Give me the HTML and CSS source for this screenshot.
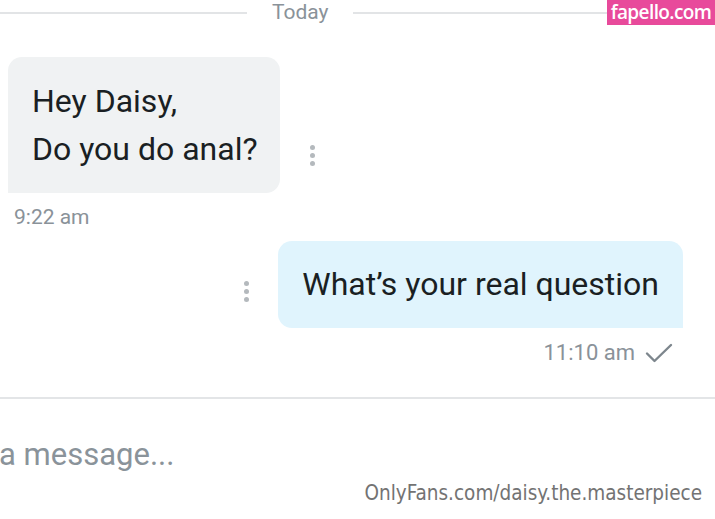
FILE: index.html
```html
<!DOCTYPE html>
<html>
<head>
<meta charset="utf-8">
<link rel="stylesheet" href="styles.css">
</head>
<body>
<div class="screen">
  <div class="date-row">
    <span class="date-line date-line-left"></span>
    <span class="date-label">Today</span>
    <span class="date-line date-line-right"></span>
  </div>
  <div class="badge">fapello.com</div>

  <div class="msg msg-in">
    <div class="msg-row">
      <div class="bubble bubble-in">Hey Daisy,<br>Do you do anal?</div>
      <div class="kebab kebab-in"><i></i><i></i><i></i></div>
    </div>
    <div class="msg-time msg-time-in">9:22 am</div>
  </div>

  <div class="msg msg-out">
    <div class="msg-row msg-row-out">
      <div class="kebab kebab-out"><i></i><i></i><i></i></div>
      <div class="bubble bubble-out">What’s your real question</div>
    </div>
    <div class="msg-time msg-time-out">
      <span>11:10 am</span>
      <svg class="check" width="28" height="20" viewBox="0 0 28 20"><path d="M2 10.5 L9.5 18 L26 2" fill="none" stroke="#7d868d" stroke-width="2.4" stroke-linecap="round" stroke-linejoin="round"/></svg>
    </div>
  </div>

  <div class="composer">
    <div class="composer-input">a message...</div>
  </div>
  <div class="watermark">OnlyFans.com/daisy.the.masterpiece</div>
</div>
</body>
</html>
```

FILE: styles.css
```css
html, body {
  margin: 0;
  padding: 0;
  background: #ffffff;
}
.screen {
  position: relative;
  width: 715px;
  height: 519px;
  overflow: hidden;
  font-family: Roboto, "Liberation Sans", sans-serif;
}
.date-row {
  display: flex;
  align-items: center;
  height: 26px;
}
.date-line {
  height: 2px;
  background: #e2e4e6;
}
.date-line-left {
  width: 247px;
}
.date-line-right {
  flex: 1;
}
.date-label {
  align-self: flex-start;
  font-family: Roboto, sans-serif;
  font-size: 21px;
  line-height: 25px;
  color: #8a9299;
  padding: 0 24px 0 25px;
}
.badge {
  position: absolute;
  top: 0;
  right: 0;
  width: 108px;
  height: 25px;
  background: #e84a9b;
  color: #fff;
  font-family: "Open Sans", sans-serif;
  font-weight: 600;
  font-size: 19px;
  line-height: 24px;
  text-align: center;
  letter-spacing: -0.6px;
}
.msg-in {
  margin-top: 31px;
}
.msg-row {
  display: flex;
  align-items: flex-end;
}
.msg-row-out {
  justify-content: flex-end;
}
.bubble {
  font-size: 32px;
  color: #1a1f23;
}
.bubble-in {
  margin-left: 8px;
  width: 248px;
  padding: 20px 0 20px 24px;
  line-height: 48px;
  background: #f0f2f3;
  border-radius: 14px 14px 14px 0;
}
.bubble-out {
  margin-right: 32px;
  padding: 22px 24px 22px 24px;
  line-height: 43px;
  background: #e0f4fd;
  border-radius: 14px 14px 0 14px;
}
.kebab {
  display: flex;
  flex-direction: column;
  gap: 3px;
}
.kebab i {
  display: block;
  width: 5px;
  height: 5px;
  border-radius: 50%;
  background: #b4b9bd;
}
.kebab-in {
  margin-left: 30px;
  margin-bottom: 27px;
}
.kebab-out {
  margin-right: 29px;
  margin-bottom: 26px;
}
.msg-time {
  font-size: 21px;
  line-height: 28px;
  color: #8a9299;
}
.msg-time-in {
  margin-top: 10px;
  padding-left: 14px;
}
.msg-out {
  margin-top: 10px;
}
.msg-time-out {
  display: flex;
  justify-content: flex-end;
  align-items: center;
  gap: 10px;
  margin-top: 11px;
  padding-right: 42px;
  font-size: 22px;
}
.check {
  display: block;
}
.composer {
  margin-top: 30px;
  border-top: 2px solid #e3e5e7;
  padding-top: 38px;
}
.composer-input {
  font-size: 31px;
  line-height: 36px;
  color: #8a939a;
  margin-left: -1px;
}
.watermark {
  position: absolute;
  right: 13px;
  bottom: 14px;
  font-family: "DejaVu Sans Condensed", "DejaVu Sans", sans-serif;
  font-stretch: condensed;
  font-size: 20.5px;
  line-height: 24px;
  color: #737373;
}
```
